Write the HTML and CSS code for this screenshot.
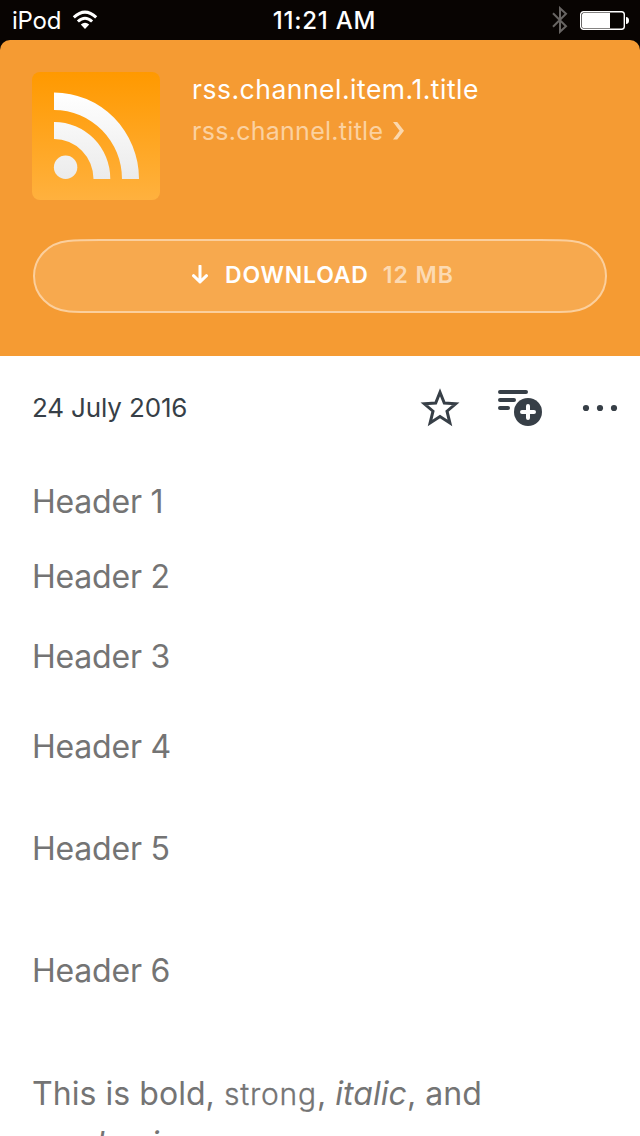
FILE: index.html
```html
<!DOCTYPE html>
<html lang="en">
<head>
<meta charset="utf-8">
<title>rss.channel.item.1.title</title>
<link rel="stylesheet" href="styles.css">
</head>
<body>
<main class="screen">
  <div class="status">
    <div class="status-left"><span class="device">iPod</span>
      <svg class="wifi" width="26" height="20" viewBox="0 0 26 20"><g fill="none" stroke="#fff" stroke-width="3"><path d="M1.8 7.4Q13-3.2 24.2 7.4"/><path d="M5.9 11.5Q13 4.9 20.1 11.5"/></g><path d="M8.8 14.6Q13 10.8 17.2 14.6L13 19Z" fill="#fff"/></svg>
    </div>
    <time class="clock">11:21 AM</time>
    <div class="status-right">
      <svg width="18" height="28" viewBox="0 0 18 28"><path d="M2 7.2L15 20.2L9 25.8V2.2L15 7.8L2 20.8" fill="none" stroke="#686563" stroke-width="2"/></svg>
      <svg class="battery" width="49" height="20" viewBox="0 0 49 20"><rect x=".7" y="1.7" width="43.6" height="17.6" rx="2.8" fill="none" stroke="#fff" stroke-width="1.4"/><path d="M2 4.5Q2 3 3.5 3H30V18H3.5Q2 18 2 16.5Z" fill="#fff"/><path d="M46 7Q49 7.3 49 10.5T46 14Z" fill="#fff"/></svg>
    </div>
  </div>
  <header class="hero">
    <div class="episode">
      <svg class="cover" width="128" height="128" viewBox="0 0 128 128">
        <defs>
          <linearGradient id="cover-bg" x1="0" y1="0" x2="0" y2="1"><stop stop-color="#ff9900"/><stop offset="1" stop-color="#ffb13e"/></linearGradient>
          <linearGradient id="waves" gradientUnits="userSpaceOnUse" x1="0" y1="20" x2="0" y2="108"><stop stop-color="#fff"/><stop offset="1" stop-color="#ebebeb"/></linearGradient>
        </defs>
        <rect width="128" height="128" rx="8" fill="url(#cover-bg)"/>
        <g fill="url(#waves)"><path d="M22 20.5A85 86.5 0 0 1 107 107H90A68 69 0 0 0 22 38Z"/><path d="M22 50A56 57 0 0 1 78.3 107H61.5A39.5 40 0 0 0 22 67Z"/><circle cx="33.6" cy="95.2" r="11.7"/></g>
      </svg>
      <div class="titles">
        <h1 class="title">rss.channel.item.1.title</h1>
        <div class="channel"><span>rss.channel.title</span><svg width="12" height="18" viewBox="0 0 12 18"><path d="M0 0H4.2L11 8.8L4.2 17.6H0L6.6 8.8Z" fill="#fbd8ae"/></svg></div>
      </div>
    </div>
    <div class="download">
      <svg class="pill" width="576" height="76" viewBox="0 0 576 76"><path d="M68 1H508C524 1 532 1.2 540 2C560 4 574 19 574 37C574 56 559 71 539 72.5C531 73 524 73 508 73H68C52 73 45 73 37 72.5C17 71 2 56 2 37C2 19 16 4 36 2C44 1.2 52 1 68 1Z" fill="#f7a94e" stroke="#fbcf9d" stroke-width="2"/></svg>
      <div class="label"><svg width="18" height="20" viewBox="0 0 18 20"><path d="M9 1V17M2.5 10.7L9 17L15.5 10.7" fill="none" stroke="#fff" stroke-width="3" stroke-linecap="round" stroke-linejoin="round"/></svg><span class="action">DOWNLOAD</span><span class="size">12 MB</span></div>
    </div>
  </header>
  <div class="toolbar">
    <time class="date">24 July 2016</time>
    <div class="tools">
      <svg width="40" height="40" viewBox="0 0 40 40"><path d="M20 4.2L24.3 15L35.7 15.8L27 23.2L29.9 35L20 28.6L10.1 35L13 23.2L4.3 15.8L15.7 15Z" fill="none" stroke="#373f47" stroke-width="3"/></svg>
      <svg width="46" height="40" viewBox="0 0 46 40"><path d="M2 4H28M2 12H16M2 20H10" stroke="#373f47" stroke-width="4" stroke-linecap="round"/><circle cx="30" cy="24" r="14" fill="#373f47"/><path d="M30 18V30M24 24H36" stroke="#fff" stroke-width="4" stroke-linecap="round"/></svg>
      <svg width="36" height="8" viewBox="0 0 36 8" fill="#373f47"><circle cx="4" cy="4" r="3.1"/><circle cx="18" cy="4" r="3.1"/><circle cx="32" cy="4" r="3.1"/></svg>
    </div>
  </div>
  <article class="notes">
    <h1 class="h1">Header 1</h1>
    <h2 class="h2">Header 2</h2>
    <h3 class="h3">Header 3</h3>
    <h4 class="h4">Header 4</h4>
    <h5 class="h5">Header 5</h5>
    <h6 class="h6">Header 6</h6>
    <p class="text">This is bold, <strong class="strong">strong</strong>, <i>italic</i>, and<br><em class="em">emphasis</em></p>
  </article>
</main>
</body>
</html>
```
FILE: styles.css
```css
* { box-sizing: border-box; }
body { margin: 0; background: #080402; font-family: Inter, sans-serif; }
svg { display: block; flex: none; }
.screen { width: 640px; height: 1136px; overflow: hidden; background: #fff; }
.status { height: 52px; padding: 1px 11px 11px 12px; background: #080402; color: #fff; display: grid; grid-template-columns: 1fr auto 1fr; align-items: center; font-size: 24px; line-height: 40px; }
.status-left { display: flex; align-items: center; gap: 11px; }
.device { letter-spacing: -.2px; }
.wifi { margin-top: -2px; }
.clock { padding-left: 8px; font-weight: 500; letter-spacing: .8px; }
.status-right { display: flex; align-items: center; justify-content: flex-end; gap: 11px; margin-top: -3px; }
.hero { height: 316px; margin-top: -12px; padding: 32px; background: #f59b33; border-radius: 10px 10px 0 0; }
.episode { display: flex; gap: 32px; height: 128px; }
.title { margin: 0; color: #fff; font-size: 26.5px; line-height: 34px; font-weight: 400; letter-spacing: .5px; }
.channel { display: flex; align-items: center; gap: 10px; margin-top: 7px; font-size: 25px; line-height: 36px; color: #fbd1a0; letter-spacing: .28px; }
.download { display: grid; margin-top: 39px; height: 76px; }
.pill, .label { grid-area: 1 / 1; }
.label { display: flex; align-items: center; padding-left: 159px; height: 71px; font-size: 23px; font-weight: 600; letter-spacing: .8px; color: #fff; }
.action { margin-left: 16px; }
.size { margin-left: 14px; color: #fcdab2; letter-spacing: 1px; }
.toolbar { display: flex; align-items: center; justify-content: space-between; height: 104px; padding: 0 22px 0 32px; color: #373f47; }
.date { padding-bottom: 2px; font-size: 26px; letter-spacing: -.15px; }
.tools { display: flex; align-items: center; gap: 38px; }
.notes { padding: 17px 32px 0; color: #747474; font-size: 32px; line-height: 50px; letter-spacing: -.2px; }
.h1, .h2, .h3, .h4, .h5, .h6, .text { margin: 0; font: inherit; }
.h1 { margin-bottom: 25px; }
.h2 { margin-bottom: 30px; }
.h3 { margin-bottom: 40px; }
.h4 { margin-bottom: 52px; }
.h5 { margin-bottom: 72px; }
.h6 { margin-bottom: 73px; }
.text { white-space: nowrap; letter-spacing: .05px; }
.strong { font-size: 30px; font-weight: 300; letter-spacing: .8px; line-height: 1; -webkit-text-stroke: .3px #747474; }
.em { letter-spacing: -.4px; }
```
